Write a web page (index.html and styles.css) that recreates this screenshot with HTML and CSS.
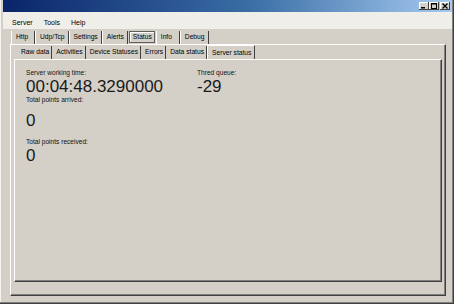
FILE: index.html
```html
<!DOCTYPE html>
<html lang="en">
<head>
  <meta charset="UTF-8">
  <title>Server status</title>
  <link rel="stylesheet" href="styles.css">
</head>
<body>
  <div class="window">
    <div class="titlebar">
      <span class="cap-btn">
        <svg width="10" height="8" viewBox="0 0 10 8"><rect x="2" y="5" width="4" height="1.5" fill="#000"/></svg>
      </span>
      <span class="cap-btn">
        <svg width="10" height="8" viewBox="0 0 10 8"><rect x="2.5" y="1.5" width="5" height="5" fill="none" stroke="#000" stroke-width="1"/><rect x="2.5" y="1.5" width="5" height="1" fill="#000"/></svg>
      </span>
      <span class="cap-btn close">
        <svg width="10" height="8" viewBox="0 0 10 8"><path d="M2.5 1.5 L7.5 6.5 M7.5 1.5 L2.5 6.5" stroke="#000" stroke-width="1.3"/></svg>
      </span>
    </div>

    <div class="menubar">
      <span>Server</span>
      <span>Tools</span>
      <span>Help</span>
    </div>

    <div class="client">
      <div class="tabs outer-tabs">
        <span class="tab">Http</span>
        <span class="tab">Udp/Tcp</span>
        <span class="tab">Settings</span>
        <span class="tab">Alerts</span>
        <span class="tab active">Status</span>
        <span class="tab">Info</span>
        <span class="tab">Debug</span>
      </div>

      <div class="panel outer-panel">
        <div class="tabs inner-tabs">
          <span class="tab">Raw data</span>
          <span class="tab">Activities</span>
          <span class="tab">Device Statuses</span>
          <span class="tab">Errors</span>
          <span class="tab">Data status</span>
          <span class="tab selected">Server status</span>
        </div>

        <div class="panel inner-panel">
          <div class="stat-row">
            <div class="stat time">
              <div class="label">Server working time:</div>
              <div class="value">00:04:48.3290000</div>
            </div>
            <div class="stat">
              <div class="label">Thred queue:</div>
              <div class="value">-29</div>
            </div>
          </div>
          <div class="stat arrived">
            <div class="label">Total points arrived:</div>
            <div class="value">0</div>
          </div>
          <div class="stat received">
            <div class="label">Total points received:</div>
            <div class="value">0</div>
          </div>
        </div>
      </div>
    </div>
  </div>
</body>
</html>
```

FILE: styles.css
```css
* {
  box-sizing: border-box;
}
body {
  margin: 0;
  background: #d4d0c8;
  font-family: "Liberation Sans", Arial, sans-serif;
  font-size: 6.7px;
  color: #000;
}
.window {
  width: 454px;
  height: 304px;
  background: #d4d0c8;
  padding: 0 2px 2px 3px;
  box-shadow: inset -1px -1px #404040, inset -2px -2px #808080, inset 1px 0 #f4f3ef;
  display: flex;
  flex-direction: column;
}
.titlebar {
  height: 12px;
  background: linear-gradient(to right, #0a246a, #3a6ea5 55%, #a6caf0);
  display: flex;
  justify-content: flex-end;
  align-items: center;
  padding-right: 2px;
}
.cap-btn {
  width: 10px;
  height: 8px;
  background: #d4d0c8;
  box-shadow: inset -1px -1px #404040, inset 1px 1px #fff;
  display: flex;
}
.cap-btn.close {
  margin-left: 1px;
}
.menubar {
  height: 17px;
  background: #efeee9;
  display: flex;
  align-items: center;
  padding: 3px 0 0 9px;
  gap: 11px;
  font-size: 7px;
  line-height: 9px;
}
.client {
  flex: 1;
  padding: 2px 6px 0 7px;
}
.tabs {
  display: flex;
  height: 13px;
}
.outer-tabs {
  margin-left: 1px;
}
.tab {
  min-width: 24px;
  padding: 0 3px 0 4px;
  line-height: 12px;
  border-left: 1px solid #fff;
  border-right: 1px solid #404040;
  white-space: nowrap;
}
.tab.active {
  margin: 0 1px 0 1px;
  border: 1px solid #606060;
  box-shadow: inset 1px 1px #fff;
  padding: 0 2px 0 3px;
  line-height: 10px;
  height: 12px;
}
.panel {
  background: #d4d0c8;
  border-top: 1px solid #fff;
  border-left: 1px solid #fff;
  border-right: 1px solid #404040;
  border-bottom: 1px solid #404040;
  box-shadow: inset -1px -1px #808080;
}
.outer-panel {
  width: 436px;
  height: 252px;
  padding: 1px 3px 0 3px;
}
.inner-tabs {
  margin-left: 3px;
}
.inner-tabs .tab {
  border-left: none;
  padding: 0 2px 0 4px;
}
.inner-tabs .tab.selected {
  position: relative;
  height: 14px;
  margin-top: -1px;
  padding: 0 3px 0 4px;
  line-height: 13px;
  border-left: 1px solid #fff;
  border-top: 1px solid #fff;
  background: #d4d0c8;
  z-index: 1;
}
.inner-panel {
  width: 428px;
  height: 223px;
  padding: 8px 10px 0 11px;
}
.stat-row {
  display: grid;
  grid-template-columns: 171px auto;
}
.label {
  font-size: 6.6px;
  line-height: 9px;
  color: #111;
}
.value {
  font-size: 17px;
  line-height: 16px;
  margin-top: 2px;
  color: #1a1a1a;
}
.arrived .value {
  margin-top: 9px;
}
.received {
  margin-top: 8px;
}
```
